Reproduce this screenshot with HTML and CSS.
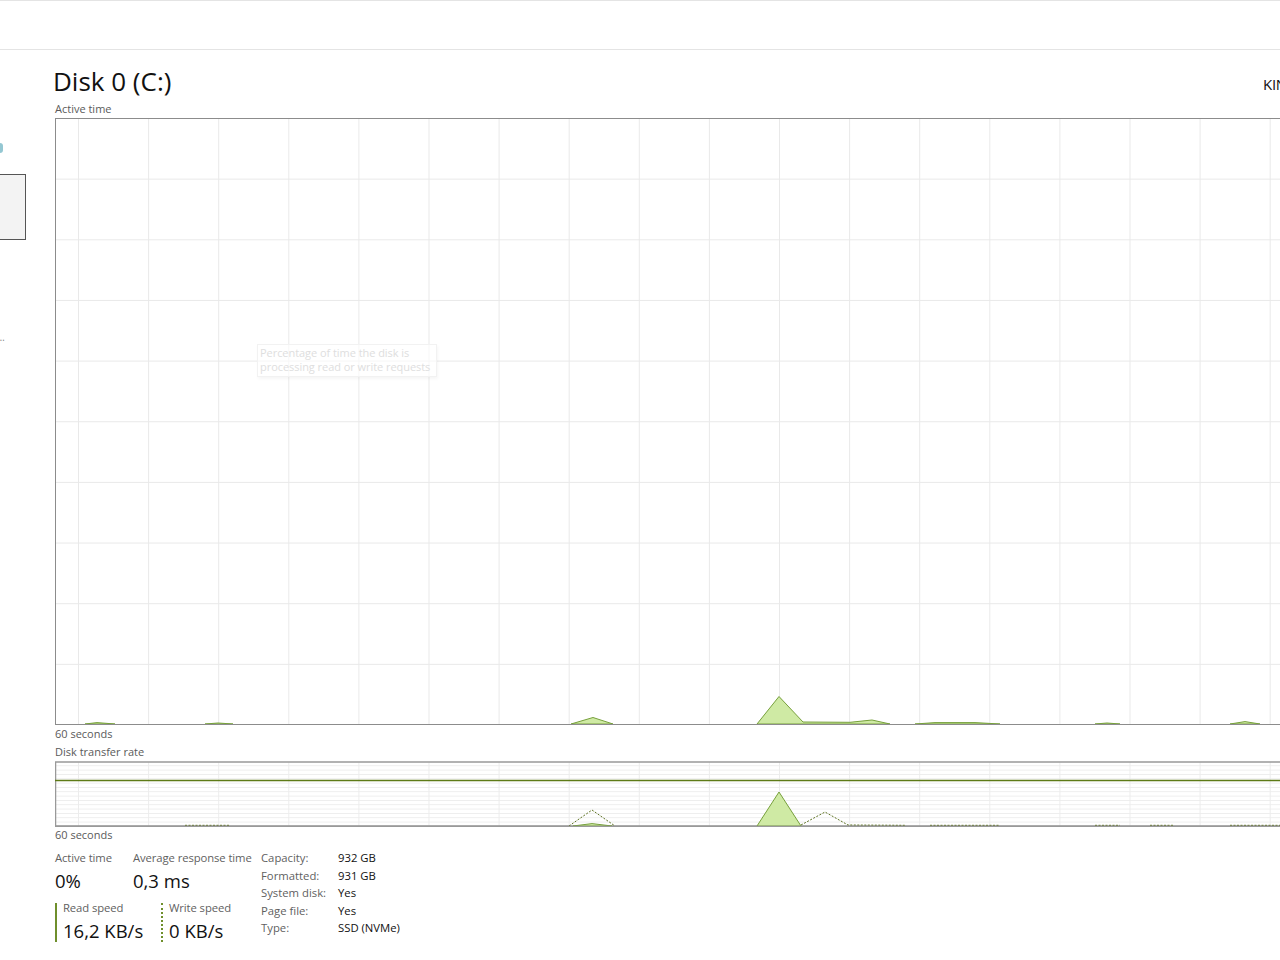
FILE: index.html
```
<!DOCTYPE html>
<html lang="en">

<head>
    <meta charset="UTF-8">
    <meta name="viewport" content="width=device-width, initial-scale=1.0">
    <title>Task Manager - Disk 0</title>
    <link rel="stylesheet" href="styles.css">
</head>

<body>
    <div class="topbar"></div>

    <div class="content">
        <div class="sidebar">
            <div class="side-mark"></div>
            <div class="side-selected"></div>
            <div class="side-more">…</div>
        </div>

        <div class="panel">
            <div class="title-row">
                <h1 class="title">Disk 0 (C:)</h1>
                <div class="model">KINGSTON SNV2S1000G</div>
            </div>

            <div class="graph-label first">Active time</div>
            <div class="graph-wrap">
                <svg class="graph" width="1360" height="607" viewBox="0 0 1360 607">
                    <defs>
                        <pattern id="grid1" x="23" y="0" width="70.1" height="60.65" patternUnits="userSpaceOnUse">
                            <path d="M0.5 0V61M0 0.5H71" stroke="#e9e9e9" fill="none" shape-rendering="crispEdges" />
                        </pattern>
                    </defs>
                    <rect x="0.5" y="0.5" width="1359" height="606" fill="url(#grid1)" stroke="#8c8c8c" shape-rendering="crispEdges" />
                    <g class="area">
                        <polygon points="30,606 42,604.6 60,606" />
                        <polygon points="150,606 163,605 178,606" />
                        <polygon points="516,606 538,599.5 558,606" />
                        <polygon points="702,606 724,578.5 748,604 795,604.3 817,602 835,606" />
                        <polygon points="860,606 880,604.6 920,604.6 945,606" />
                        <polygon points="1040,606 1052,605 1065,606" />
                        <polygon points="1175,606 1190,603.6 1205,606" />
                    </g>
                    <line x1="0" y1="606.5" x2="1360" y2="606.5" stroke="#8c8c8c" />
                </svg>
                <div class="tooltip">Percentage of time the disk is processing read or write requests</div>
            </div>
            <div class="graph-label">60 seconds</div>

            <div class="graph-label second">Disk transfer rate</div>
            <svg class="graph small" width="1360" height="66" viewBox="0 0 1360 66">
                <defs>
                    <pattern id="grid2" x="23" y="0" width="70.1" height="4.33" patternUnits="userSpaceOnUse">
                        <path d="M0.5 0V5M0 0.5H71" stroke="#ececec" fill="none" shape-rendering="crispEdges" />
                    </pattern>
                </defs>
                <rect x="0.5" y="1" width="1359" height="64" fill="url(#grid2)" stroke="#999999" stroke-width="1.5" />
                <line x1="0" y1="19.5" x2="1360" y2="19.5" stroke="#5d7a16" stroke-width="1.3" />
                <g class="area">
                    <polygon points="518,65 537,62.6 557,65" />
                    <polygon points="702,65 724,31 746,65" />
                </g>
                <g class="dashed">
                    <polyline points="514,65 537,49 560,65" />
                    <polyline points="746,64 770,51 793,64 850,64.3" />
                    <polyline points="130,64.3 175,64.3" />
                    <polyline points="875,64.3 945,64.3" />
                    <polyline points="1040,64.3 1065,64.3" />
                    <polyline points="1095,64.3 1118,64.3" />
                    <polyline points="1175,64.3 1240,64.3" />
                </g>
                <line x1="0" y1="65.3" x2="1360" y2="65.3" stroke="#999999" stroke-width="1.3" />
            </svg>
            <div class="graph-label">60 seconds</div>

            <div class="stats">
                <div class="stats-left">
                    <div class="stat-row">
                        <div class="stat active">
                            <div class="stat-label">Active time</div>
                            <div class="stat-value">0%</div>
                        </div>
                        <div class="stat">
                            <div class="stat-label">Average response time</div>
                            <div class="stat-value">0,3 ms</div>
                        </div>
                    </div>
                    <div class="stat-row speeds">
                        <div class="stat read">
                            <div class="stat-label">Read speed</div>
                            <div class="stat-value">16,2 KB/s</div>
                        </div>
                        <div class="stat write">
                            <div class="stat-label">Write speed</div>
                            <div class="stat-value">0 KB/s</div>
                        </div>
                    </div>
                </div>

                <div class="details">
                    <div class="detail-label">Capacity:</div>
                    <div class="detail-value">932 GB</div>
                    <div class="detail-label">Formatted:</div>
                    <div class="detail-value">931 GB</div>
                    <div class="detail-label">System disk:</div>
                    <div class="detail-value">Yes</div>
                    <div class="detail-label">Page file:</div>
                    <div class="detail-value">Yes</div>
                    <div class="detail-label">Type:</div>
                    <div class="detail-value">SSD (NVMe)</div>
                </div>
            </div>
        </div>
    </div>
</body>

</html>
```

FILE: styles.css
```
body {
    font-family: "Open Sans", "Noto Sans", sans-serif;
    background-color: #ffffff;
    color: #111111;
    margin: 0;
    padding: 0;
    width: 1280px;
    height: 960px;
    overflow: hidden;
}

.topbar {
    height: 48px;
    border-top: 1px solid #e4e4e4;
    border-bottom: 1px solid #e4e4e4;
}

.content {
    display: flex;
}

.sidebar {
    flex: 0 0 55px;
}

.side-mark {
    margin-top: 93px;
    width: 3px;
    height: 10px;
    border-radius: 0 4px 4px 0;
    background-color: #2a8fa6;
    opacity: 0.5;
}

.side-selected {
    margin-top: 21px;
    margin-left: -20px;
    width: 44px;
    height: 64px;
    background-color: #f3f3f3;
    border: 1px solid #555555;
}

.side-more {
    margin-top: 92px;
    font-size: 10px;
    line-height: 10px;
    color: #888888;
    width: 8px;
    overflow: hidden;
    text-indent: -3px;
}

.panel {
    flex: 0 0 1360px;
}

.title-row {
    display: flex;
    align-items: flex-end;
    padding-top: 15px;
    height: 32px;
}

.title {
    flex: 0 0 1208px;
    margin: 0 0 0 -2px;
    font-size: 26px;
    font-weight: 400;
    line-height: 32px;
}

.model {
    font-size: 15px;
    line-height: 20px;
    letter-spacing: -0.3px;
    margin-left: 2px;
    margin-bottom: 3px;
    white-space: nowrap;
}

.graph-label {
    font-size: 11px;
    line-height: 16px;
    color: #5a5a5a;
}

.graph-label.first {
    margin-top: 4px;
    margin-bottom: 1px;
}

.graph-label.second {
    margin-top: 2px;
    margin-bottom: 1px;
}

.graph-wrap {
    position: relative;
    height: 607px;
    margin-bottom: 1px;
}

.graph {
    display: block;
}

.area polygon {
    fill: #cfeaa4;
    stroke: #77a03c;
    stroke-width: 1;
    stroke-linejoin: round;
}

.dashed polyline {
    fill: none;
    stroke: #5f7424;
    stroke-width: 1;
    stroke-dasharray: 2 1.5;
}

.tooltip {
    position: absolute;
    left: 202px;
    top: 226px;
    width: 174px;
    padding: 1px 2px 2px;
    font-size: 11px;
    line-height: 14px;
    letter-spacing: -0.05px;
    color: #dedede;
    background-color: rgba(255, 255, 255, 0.6);
    border: 1px solid #f2f2f2;
    box-shadow: 1px 2px 3px rgba(0, 0, 0, 0.04);
}

.stats {
    display: flex;
    margin-top: 7px;
}

.stats-left {
    flex: 0 0 206px;
}

.stat-row {
    display: flex;
}

.stat-label {
    font-size: 11.3px;
    line-height: 16px;
    letter-spacing: -0.1px;
    color: #5f5f5f;
}

.stat-value {
    font-size: 18.5px;
    line-height: 24px;
    margin-top: 3px;
}

.stat.active {
    flex: 0 0 78px;
}

.speeds {
    margin-top: 10px;
}

.stat.read,
.stat.write {
    height: 39px;
    padding-left: 6px;
}

.stat.read {
    flex: 0 0 98px;
    border-left: 2px solid #6f8f2c;
}

.stat.write {
    border-left: 2px dotted #6f8f2c;
}

.speeds .stat-label {
    margin-top: -3px;
}

.details {
    display: grid;
    grid-template-columns: 77px auto;
    grid-auto-rows: 17.5px;
    font-size: 11.3px;
    line-height: 17.5px;
    margin-top: -1px;
}

.detail-label {
    color: #5f5f5f;
}

.detail-value {
    color: #111111;
}
```
